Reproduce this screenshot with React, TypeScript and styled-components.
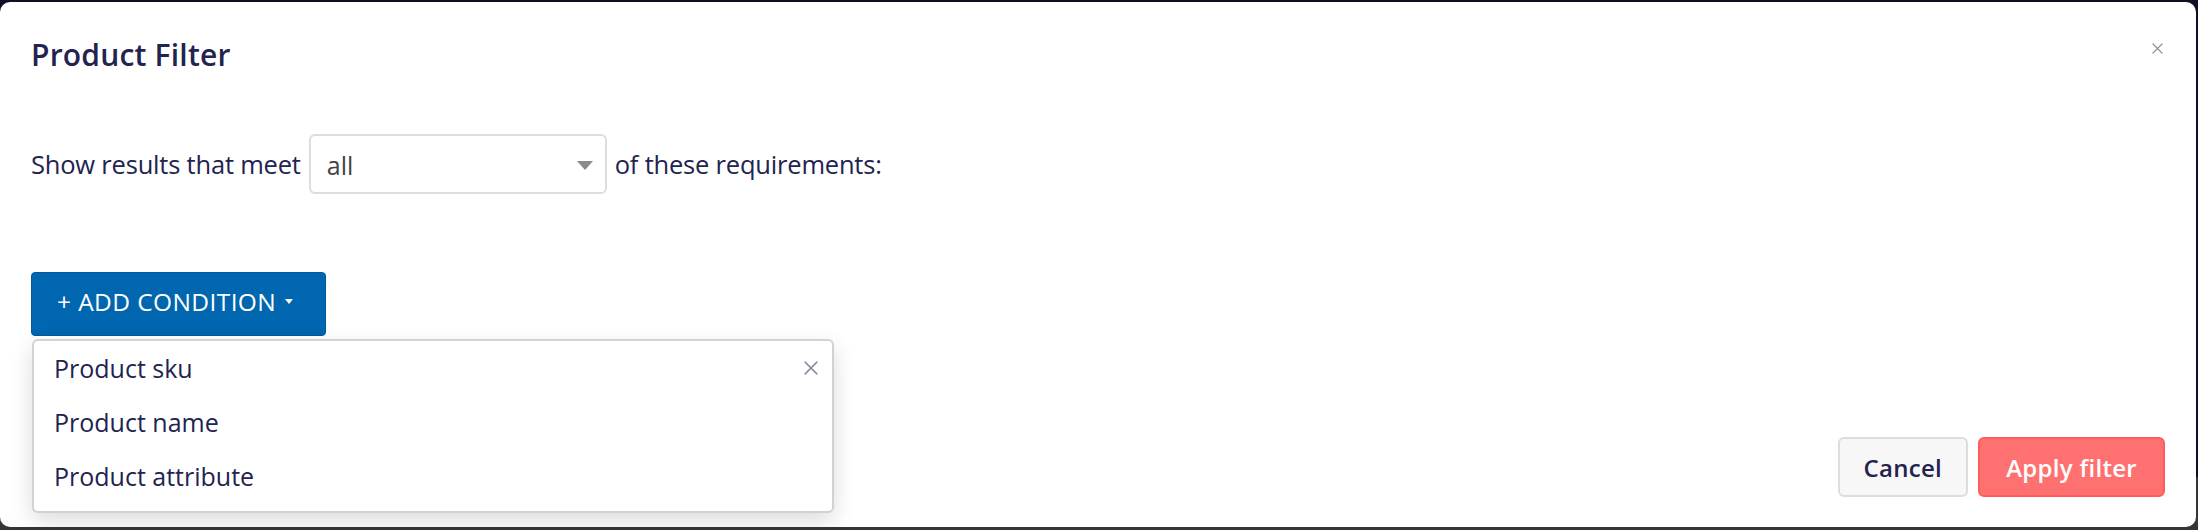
import styled, { createGlobalStyle } from "styled-components";

const GlobalStyle = createGlobalStyle`
  body {
    margin: 0;
    background: #100f26;
    font-family: "Open Sans", "Liberation Sans", sans-serif;
  }
  * { box-sizing: border-box; }
`;

const Backdrop = styled.div`
  width: 2198px;
  height: 530px;
  padding-top: 2px;
  background: linear-gradient(#100f26 0 90%, #34343a 90% 100%);
  overflow: hidden;
`;

const Modal = styled.div`
  width: 2196px;
  height: 525px;
  background: #ffffff;
  border-radius: 10px;
  display: flex;
  flex-direction: column;
  padding: 0 31px 30px 31px;
  color: #22234f;
`;

const Header = styled.div`
  display: flex;
  justify-content: space-between;
  align-items: flex-start;
  padding-top: 33px;
`;

const Title = styled.h2`
  margin: 0;
  font-size: 30px;
  line-height: 40px;
  font-weight: 600;
  letter-spacing: 0.2px;
`;

const CloseButton = styled.button`
  border: none;
  background: none;
  padding: 0;
  margin-top: 8px;
  margin-right: 2px;
  width: 11px;
  height: 11px;
  display: flex;
  cursor: pointer;
`;

const MatchRow = styled.div`
  display: flex;
  align-items: center;
  gap: 8px;
  margin-top: 59px;
  font-size: 25.5px;
  letter-spacing: -0.2px;
`;

const SelectBox = styled.div`
  width: 298px;
  height: 60px;
  border: 2px solid #dddddd;
  border-radius: 6px;
  display: flex;
  align-items: center;
  justify-content: space-between;
  padding: 2px 12px 0 16px;
  font-size: 25px;
  letter-spacing: 0;
  color: #444444;
`;

const Caret = styled.span<{ size: number; color: string }>`
  width: 0;
  height: 0;
  border-left: ${({ size }) => size}px solid transparent;
  border-right: ${({ size }) => size}px solid transparent;
  border-top: ${({ size }) => Math.round(size * 1.15)}px solid ${({ color }) => color};
`;

const ConditionArea = styled.div`
  position: relative;
  margin-top: 78px;
  width: 295px;
`;

const AddButton = styled.button`
  width: 295px;
  height: 64px;
  border: 1px solid #005a9c;
  border-radius: 4px;
  background: #0066b0;
  color: #ffffff;
  font-family: "Open Sans", "Liberation Sans", sans-serif;
  font-size: 24.5px;
  font-weight: 500;
  letter-spacing: 0.4px;
  text-transform: uppercase;
  display: flex;
  align-items: center;
  gap: 9px;
  padding: 0 0 6px 25px;
  cursor: pointer;
`;

const Menu = styled.ul`
  position: absolute;
  top: 67px;
  left: 1px;
  width: 802px;
  height: 174px;
  margin: 0;
  padding: 0;
  list-style: none;
  background: #ffffff;
  border: 2px solid #d2d2d2;
  border-radius: 6px;
  box-shadow: 0 8px 22px rgba(0, 0, 0, 0.14);
`;

const MenuItem = styled.li`
  display: flex;
  align-items: center;
  justify-content: space-between;
  height: 54px;
  padding: 0 14px 0 20px;
  font-size: 25px;
  color: #22234f;
`;

const MenuClose = styled.span`
  display: flex;
  width: 14px;
  height: 14px;
`;

const Footer = styled.div`
  margin-top: auto;
  display: flex;
  justify-content: flex-end;
  gap: 10px;
`;

const FooterButton = styled.button<{ primary?: boolean }>`
  height: 60px;
  padding: 0 ${({ primary }) => (primary ? 26 : 24)}px;
  border-radius: 6px;
  border: 2px solid ${({ primary }) => (primary ? "#ff5c5c" : "#dddddd")};
  background: ${({ primary }) => (primary ? "#ff7171" : "#f7f7f7")};
  color: ${({ primary }) => (primary ? "#ffffff" : "#22234f")};
  font-family: "Open Sans", "Liberation Sans", sans-serif;
  font-size: 24px;
  font-weight: 600;
  letter-spacing: 0.3px;
  cursor: pointer;
`;

const Cross = ({ color, width }: { color: string; width: number }) => (
  <svg viewBox="0 0 12 12" width="100%" height="100%">
    <path d="M1 1 L11 11 M11 1 L1 11" stroke={color} strokeWidth={width} strokeLinecap="round" />
  </svg>
);

export default function App() {
  const options = ["Product sku", "Product name", "Product attribute"];

  return (
    <>
      <GlobalStyle />
      <Backdrop>
        <Modal>
          <Header>
            <Title>Product Filter</Title>
            <CloseButton aria-label="Close">
              <Cross color="#8a8a8a" width={1.4} />
            </CloseButton>
          </Header>

          <MatchRow>
            <span>Show results that meet</span>
            <SelectBox>
              <span>all</span>
              <Caret size={8} color="#8a8a8a" />
            </SelectBox>
            <span>of these requirements:</span>
          </MatchRow>

          <ConditionArea>
            <AddButton type="button">
              + Add condition
              <Caret size={4} color="#ffffff" />
            </AddButton>
            <Menu>
              {options.map((label, i) => (
                <MenuItem key={label}>
                  {label}
                  {i === 0 && (
                    <MenuClose>
                      <Cross color="#8e8ca6" width={1.4} />
                    </MenuClose>
                  )}
                </MenuItem>
              ))}
            </Menu>
          </ConditionArea>

          <Footer>
            <FooterButton type="button">Cancel</FooterButton>
            <FooterButton type="button" primary>
              Apply filter
            </FooterButton>
          </Footer>
        </Modal>
      </Backdrop>
    </>
  );
}
